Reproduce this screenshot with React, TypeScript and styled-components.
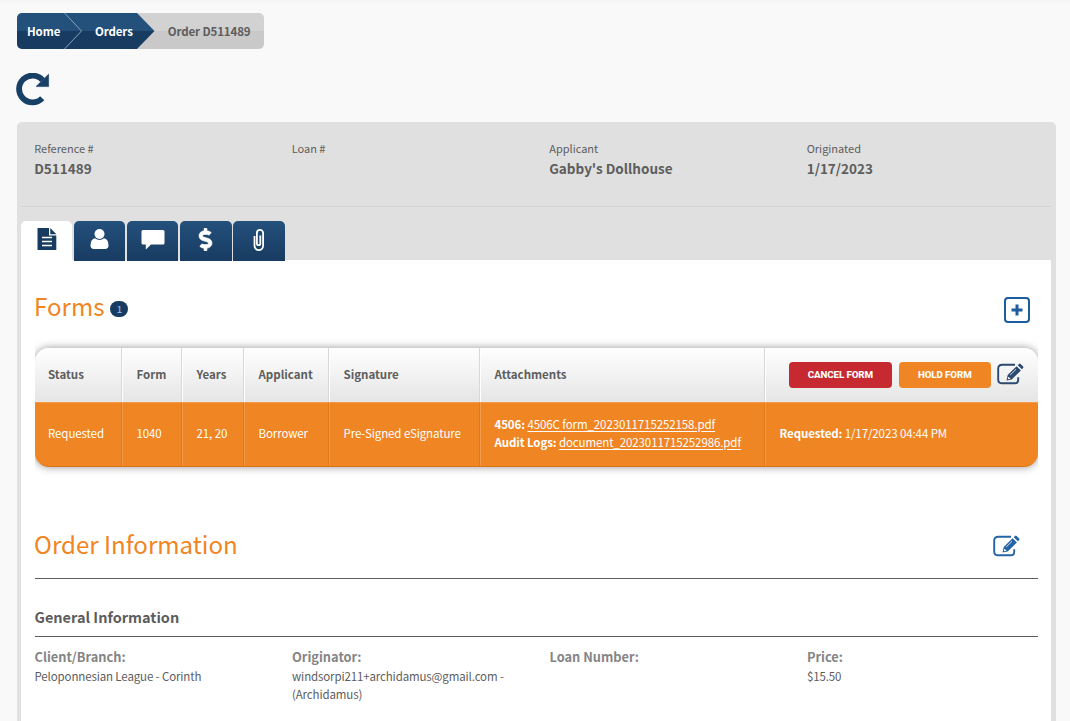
import React from "react";
import styled, { createGlobalStyle } from "styled-components";
import { FaDollarSign } from "react-icons/fa";

const GlobalStyle = createGlobalStyle`
  * { box-sizing: border-box; }
  body {
    margin: 0;
    height: 721px;
    overflow: hidden;
    background: #f9f9f9;
    color: #5d5d5d;
    font-family: "Noto Sans CJK SC", "Open Sans", sans-serif;
    font-size: 12px;
  }
`;

const Page = styled.div`
  height: 721px;
  overflow: hidden;
  padding: 13px 14px 0 16.5px;
  background: linear-gradient(#f4f4f4, #f9f9f9 4px);
`;

const Crumbs = styled.nav`
  display: flex;
  width: 247.5px;
  height: 36px;
  border-radius: 5px;
  overflow: hidden;
  background: linear-gradient(#d2d2d2 50%, #c9c9c9 50%);
  font-size: 11.5px;
  font-weight: 700;
  letter-spacing: -0.12px;
  line-height: 36px;
`;

const CrumbLinks = styled.div`
  display: flex;
  width: 138px;
  padding-left: 10.5px;
  color: #fff;
  background: linear-gradient(#24507c 50%, #183b61 50%);
  clip-path: polygon(0 0, 120.5px 0, 138px 50%, 120.5px 100%, 0 100%);
`;

const CrumbLink = styled.a<{ $width: number }>`
  width: ${(p) => p.$width}px;
  white-space: nowrap;
`;

const Chevron = styled.svg`
  width: 18px;
  height: 36px;
  margin-right: 13px;
`;

const CurrentCrumb = styled.span`
  padding-left: 13.2px;
  white-space: nowrap;
`;

const RefreshButton = styled.div`
  height: 73px;
  padding-top: 24px;
  svg { display: block; margin-left: -1px; }
`;

const Panel = styled.main`
  height: 640px;
  padding: 0 5px 0 4.5px;
  border-radius: 5px 5px 0 0;
  background: #e0e0e0;
`;

const Columns = styled.div`
  display: grid;
  grid-template-columns: repeat(4, 257.5px);
`;

const Summary = styled(Columns)`
  height: 85px;
  padding: 17px 0 0 13.2px;
  border-bottom: 1px solid #d3d3d3;
`;

const SummaryLabel = styled.div`
  font-size: 11px;
  line-height: 18px;
`;

const SummaryValue = styled.div`
  font-size: 13.5px;
  font-weight: 700;
  line-height: 22px;
`;

const Tabs = styled.div`
  display: flex;
  gap: 1.5px;
  height: 53px;
  padding-top: 14px;
`;

const Tab = styled.div<{ $active?: boolean }>`
  display: flex;
  justify-content: center;
  width: ${(p) => (p.$active ? 51 : 51.7)}px;
  height: 40px;
  padding-top: 7px;
  border-radius: 5px 5px 0 0;
  color: ${(p) => (p.$active ? "#183b61" : "#fff")};
  background: ${(p) => (p.$active ? "#fff" : "linear-gradient(#24507c, #183b61)")};
  position: relative;
`;

const DollarIcon = styled(FaDollarSign)`
  width: 15px;
  height: 23px;
  stroke: currentColor;
  stroke-width: 14px;
`;

const Content = styled.section`
  height: 500px;
  padding: 0 13px 0 13.5px;
  background: #fff;
`;

const SectionHead = styled.header<{ $height: number; $top: number; $right: number }>`
  display: flex;
  justify-content: space-between;
  height: ${(p) => p.$height}px;
  padding: ${(p) => p.$top}px ${(p) => p.$right}px 0 0;
`;

const Title = styled.h2`
  display: flex;
  margin: 0 0 0 -0.5px;
  color: #f08523;
  font-size: 24.1px;
  font-weight: 400;
  line-height: 36px;
`;

const Count = styled.span`
  width: 18px;
  height: 16px;
  margin: 13px 0 0 6px;
  border-radius: 8px;
  background: #183b61;
  color: #84b8ec;
  font-size: 9.5px;
  font-weight: 500;
  line-height: 16px;
  text-align: center;
`;

const AddButton = styled.div`
  display: flex;
  align-items: center;
  justify-content: center;
  width: 26px;
  height: 26px;
  margin-top: 9px;
  border: 2px solid #1c5c9f;
  border-radius: 4px;
`;

const HeadEdit = styled.div`
  padding-top: 9px;
`;

const TableClip = styled.div`
  height: 150px;
  padding-top: 12px;
  margin-top: -12px;
  overflow: hidden;
`;

const Table = styled.div`
  border-radius: 14px;
  box-shadow: 0 0 9px rgba(0, 0, 0, 0.42);
`;

const Row = styled.div`
  display: grid;
  grid-template-columns: 87px 60px 62px 85px 151px 285px 1fr;
  overflow: hidden;
`;

const HeadRow = styled(Row)`
  height: 54px;
  border-radius: 14px 14px 0 0;
  background: linear-gradient(#fff, #e5e5e5);
`;

const BodyRow = styled(Row)`
  height: 65px;
  border-radius: 0 0 14px 14px;
  border-top: 1px solid #f29a49;
  border-bottom: 1px solid #db7415;
  background: #f08523;
  color: #fff;
`;

const Cell = styled.div`
  display: flex;
  flex-direction: column;
  justify-content: center;
  padding: 0 0 2px 15px;
  border-right: 1px solid #d8d8d8;
  box-shadow: inset 1px 0 #fff;
  font-size: 11.5px;
  line-height: 18px;
  white-space: nowrap;

  &:last-child { border-right: 0; }
  &:first-child { padding-left: 13.5px; box-shadow: none; }
`;

const HeadCell = styled(Cell)`
  font-weight: 700;
`;

const BodyCell = styled(Cell)`
  padding-bottom: 3px;
  border-color: #df7a1b;
  box-shadow: inset 1px 0 #f29a49;
  letter-spacing: -0.1px;
`;

const Actions = styled(Cell)`
  flex-direction: row;
  align-items: center;
  justify-content: flex-start;
  padding: 0 0 0 24.3px;

  svg { margin: -1px 0 0 -1.3px; }
`;

const ActionButton = styled.button<{ $color: string; $width: number }>`
  width: ${(p) => p.$width}px;
  height: 26px;
  margin-right: 7px;
  padding: 0;
  border: 0;
  border-radius: 4px;
  background: ${(p) => p.$color};
  color: #fff;
  font: 800 9.8px/26px Roboto, sans-serif;
  letter-spacing: -0.12px;
  white-space: nowrap;
`;

const FileLink = styled.a`
  text-decoration: underline;
  text-underline-offset: 2px;
`;

const Subhead = styled.h3`
  height: 58px;
  margin: 0;
  padding-top: 27px;
  border-bottom: 1px solid #5d5d5d;
  font-size: 14.5px;
  font-weight: 700;
  line-height: 22px;
`;

const Rule = styled.hr`
  height: 1px;
  margin: 0;
  border: 0;
  background: #5d5d5d;
`;

const Details = styled(Columns)`
  padding-top: 9px;
`;

const DetailLabel = styled.div`
  color: #858585;
  font-size: 12.8px;
  font-weight: 700;
  line-height: 22px;
`;

const DetailValue = styled.div`
  margin-top: -1px;
  font-size: 11.5px;
  letter-spacing: -0.13px;
  line-height: 18px;
  white-space: pre-line;
`;

const RefreshIcon = () => (
  <svg width="34" height="34" viewBox="0 0 34 34">
    <path d="M26.6 7.2A13.4 13.4 0 1 0 26.2 25.2" fill="none" stroke="#183f66" strokeWidth="5.8" />
    <path d="M32.600 1.200v12.400H20z" fill="#183f66" stroke="#183f66" strokeWidth=".6" strokeLinejoin="round" />
  </svg>
);

const EditIcon = ({ color }: { color: string }) => (
  <svg width="27" height="23" viewBox="0 0 27 23">
    <path d="M18 1.700H5.500Q1.200 1.700 1.200 5.500v11q0 3.800 4 3.800h12.500q3.500 0 3.500-3.600v-2.500" fill="none" stroke={color} strokeWidth="1.900" />
    <path d="M9.500 17.400l1.200-5.400L19.600 3.200l4.300 4.200-9.200 9.100z" fill={color} />
    <path d="M20.700 2.200l1.300-1.300q.8-.8 1.600 0l2.500 2.500q.8.8 0 1.600l-1.200 1.300z" fill={color} />
    <path d="M13.200 12l5.800-5.700" stroke="#fff" strokeWidth=".8" />
    <path d="M11.500 13.700l2 2-1.900.5-.8-.8z" fill="#fff" />
  </svg>
);

const DocumentIcon = () => (
  <svg width="20" height="22" viewBox="0 0 20 22">
    <path d="M.5 0H12v7.500h7.300V22H.5zM13.300 0l6 6.200h-6z" fill="currentColor" />
    <path d="M5 9.500h10M5 13.500h10M5 17.500h10" stroke="#fff" strokeWidth="1.400" />
  </svg>
);

const PersonIcon = () => (
  <svg width="19" height="22" viewBox="0 0 19 22">
    <path d="M5 10.200q-4.500.8-4.500 7Q.5 21 4 21h11q3.500 0 3.500-3.800 0-6.200-4.500-7-2 1.700-4.500 1.700T5 10.200z" fill="currentColor" />
    <circle cx="9.500" cy="6" r="5" fill="currentColor" />
  </svg>
);

const CommentIcon = () => (
  <svg width="24" height="22" viewBox="0 0 24 22">
    <path d="M2 2h20q1.500 0 1.500 1.500v11.500q0 1.500-1.500 1.500H10L4.800 21.500v-5H2Q.5 16.500.5 15V3.500Q.5 2 2 2z" fill="currentColor" />
  </svg>
);

const ClipIcon = () => (
  <svg width="12" height="24" viewBox="0 0 12 24">
    <path d="M1.500 8v9.800a4.300 4.300 0 0 0 8.600 0V5a3.100 3.100 0 0 0-6.200 0v10.500a1.700 1.700 0 0 0 3.400 0V7.500" fill="none" stroke="currentColor" strokeWidth="1.800" />
  </svg>
);

const PlusIcon = () => (
  <svg width="12" height="12" viewBox="0 0 12 12">
    <path d="M6 .5v11M.5 6h11" stroke="#1c5c9f" strokeWidth="3" />
  </svg>
);

const summary = [
  ["Reference #", "D511489"],
  ["Loan #", ""],
  ["Applicant", "Gabby's Dollhouse"],
  ["Originated", "1/17/2023"],
];

const details = [
  ["Client/Branch:", "Peloponnesian League - Corinth"],
  ["Originator:", "windsorpi211+archidamus@gmail.com -\n(Archidamus)"],
  ["Loan Number:", ""],
  ["Price:", "$15.50"],
];

const headings = ["Status", "Form", "Years", "Applicant", "Signature", "Attachments"];
const values = ["Requested", "1040", "21, 20", "Borrower", "Pre-Signed eSignature"];

export default function App() {
  return (
    <Page>
      <GlobalStyle />
      <Crumbs>
        <CrumbLinks>
          <CrumbLink $width={37}>Home</CrumbLink>
          <Chevron viewBox="0 0 18 36">
            <path d="M.5 0L17.500 18 .5 36" fill="none" stroke="#8ba1b8" />
          </Chevron>
          <CrumbLink $width={40}>Orders</CrumbLink>
        </CrumbLinks>
        <CurrentCrumb>Order D511489</CurrentCrumb>
      </Crumbs>
      <RefreshButton>
        <RefreshIcon />
      </RefreshButton>
      <Panel>
        <Summary>
          {summary.map(([label, value]) => (
            <div key={label}>
              <SummaryLabel>{label}</SummaryLabel>
              <SummaryValue>{value}</SummaryValue>
            </div>
          ))}
        </Summary>
        <Tabs>
          <Tab $active><DocumentIcon /></Tab>
          <Tab><PersonIcon /></Tab>
          <Tab><CommentIcon /></Tab>
          <Tab><DollarIcon /></Tab>
          <Tab><ClipIcon /></Tab>
        </Tabs>
        <Content>
          <SectionHead $height={88} $top={28} $right={8}>
            <Title>Forms<Count>1</Count></Title>
            <AddButton><PlusIcon /></AddButton>
          </SectionHead>
          <TableClip>
            <Table>
              <HeadRow>
                {headings.map((h) => <HeadCell key={h}>{h}</HeadCell>)}
                <Actions>
                  <ActionButton $color="#c62a30" $width={103}>CANCEL FORM</ActionButton>
                  <ActionButton $color="#f08523" $width={92}>HOLD FORM</ActionButton>
                  <EditIcon color="#2c4a70" />
                </Actions>
              </HeadRow>
              <BodyRow>
                {values.map((v) => <BodyCell key={v}>{v}</BodyCell>)}
                <BodyCell>
                  <div><b>4506:</b> <FileLink>4506C form_2023011715252158.pdf</FileLink></div>
                  <div><b>Audit Logs:</b> <FileLink>document_2023011715252986.pdf</FileLink></div>
                </BodyCell>
                <BodyCell>
                  <div><b>Requested:</b> 1/17/2023 04:44 PM</div>
                </BodyCell>
              </BodyRow>
            </Table>
          </TableClip>
          <SectionHead $height={92} $top={40} $right={18.5}>
            <Title>Order Information</Title>
            <HeadEdit><EditIcon color="#2464a8" /></HeadEdit>
          </SectionHead>
          <Rule />
          <Subhead>General Information</Subhead>
          <Details>
            {details.map(([label, value]) => (
              <div key={label}>
                <DetailLabel>{label}</DetailLabel>
                <DetailValue>{value}</DetailValue>
              </div>
            ))}
          </Details>
        </Content>
      </Panel>
    </Page>
  );
}
